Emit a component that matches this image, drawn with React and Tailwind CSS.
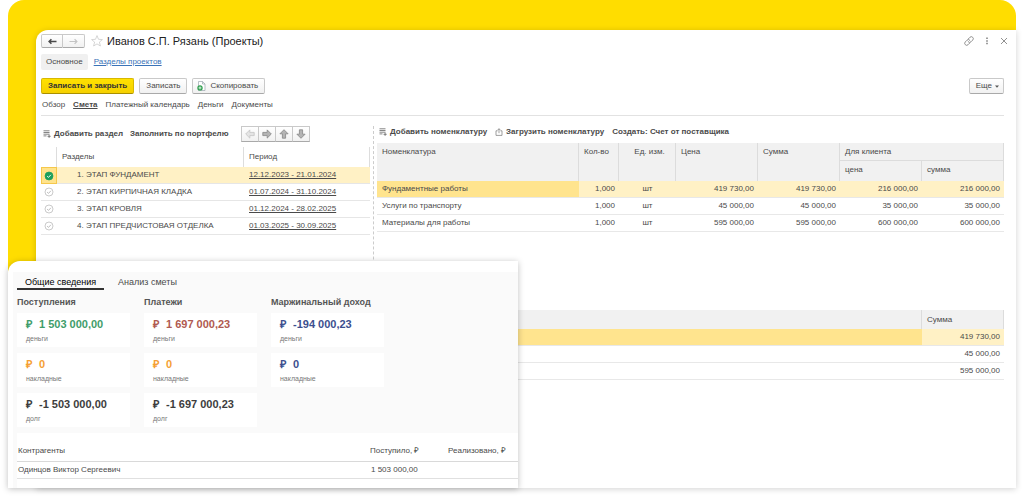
import React, { useState } from 'react';

const sections = [
  { name: '1. ЭТАП ФУНДАМЕНТ', period: '12.12.2023 - 21.01.2024' },
  { name: '2. ЭТАП КИРПИЧНАЯ КЛАДКА', period: '01.07.2024 - 31.10.2024' },
  { name: '3. ЭТАП КРОВЛЯ', period: '01.12.2024 - 28.02.2025' },
  { name: '4. ЭТАП ПРЕДЧИСТОВАЯ ОТДЕЛКА', period: '01.03.2025 - 30.09.2025' },
];

const items = [
  { name: 'Фундаментные работы', price: '419 730,00', sum: '419 730,00', client: '216 000,00' },
  { name: 'Услуги по транспорту', price: '45 000,00', sum: '45 000,00', client: '35 000,00' },
  { name: 'Материалы для работы', price: '595 000,00', sum: '595 000,00', client: '600 000,00' },
];

const totals = [
  {
    title: 'Поступления',
    cards: [
      { value: '1 503 000,00', label: 'деньги', color: 'text-[#3f9d6b]' },
      { value: '0', label: 'накладные', color: 'text-[#f59f33]' },
      { value: '-1 503 000,00', label: 'долг', color: 'text-[#3d3d3d]' },
    ],
  },
  {
    title: 'Платежи',
    cards: [
      { value: '1 697 000,23', label: 'деньги', color: 'text-[#b05a50]' },
      { value: '0', label: 'накладные', color: 'text-[#f59f33]' },
      { value: '-1 697 000,23', label: 'долг', color: 'text-[#3d3d3d]' },
    ],
  },
  {
    title: 'Маржинальный доход',
    cards: [
      { value: '-194 000,23', label: 'деньги', color: 'text-[#3c4f8f]' },
      { value: '0', label: 'накладные', color: 'text-[#3c4f8f]' },
    ],
  },
];

const ListAddIcon = () => (
  <svg className="h-2 w-2 shrink-0" viewBox="0 0 8 8" fill="none" stroke="#666" strokeWidth="0.8">
    <path d="M0.5 0.8h6M0.5 2.5h6M0.5 4.2h6M0.5 5.9h3M4.5 6.3h3.2M6.1 4.7v3.2" />
  </svg>
);

const UploadIcon = () => (
  <svg className="h-2 w-2 shrink-0" viewBox="0 0 8 8" fill="none" stroke="#777" strokeWidth="0.7">
    <path d="M2.6 2.8H1v4.6h6V2.8H5.4M4 5.2V0.8M2.6 2.1L4 0.7l1.4 1.4" />
  </svg>
);

const CopyIcon = () => (
  <svg className="h-[10px] w-[9px]" viewBox="0 0 9 10" fill="none">
    <path d="M1.5 0.5h4l2.5 2.5v6.5h-6.5z" fill="#fff" stroke="#9aa5ae" strokeWidth="0.7" />
    <path d="M5.5 0.5v2.5H8" stroke="#9aa5ae" strokeWidth="0.7" />
    <circle cx="3" cy="6.9" r="2.7" fill="#2f9e4f" />
    <path d="M1.5 6.9h3M3 5.4v3" stroke="#fff" strokeWidth="0.8" />
  </svg>
);

const CheckIcon = ({ active }) => (
  <svg className="mx-auto block h-[10px] w-[10px]" viewBox="0 0 10 10" fill="none">
    <circle cx="5" cy="5" r="4" fill={active ? '#1a9f5c' : '#fff'} stroke={active ? '#1a9f5c' : '#b5b5b5'} strokeWidth="0.7" />
    <path d="M3.1 5.1l1.4 1.3 2.4-2.6" stroke={active ? '#fff' : '#b5b5b5'} strokeWidth="0.9" />
  </svg>
);

const BlockArrow = ({ turn, muted }) => (
  <svg className={`h-[10px] w-[10px] ${turn}`} viewBox="0 0 10 10">
    <path
      d="M0.7 5L4.8 0.9v2.5H9.2v3.2H4.8v2.5z"
      fill={muted ? '#e4e4e4' : '#b4b4b4'}
      stroke={muted ? '#c4c4c4' : '#858585'}
      strokeWidth="0.8"
    />
  </svg>
);

const NavArrow = ({ color, width, turn }) => (
  <svg className={`h-[7px] w-[9px] ${turn}`} viewBox="0 0 9 7" fill="none" stroke={color} strokeWidth={width}>
    <path d="M8.5 3.5H1.2M3.4 1.2L1.1 3.5l2.3 2.3" />
  </svg>
);

const buttonBox = 'flex items-center justify-center border border-[#c9c9c9] border-b-[#a9a9a9] bg-linear-to-b from-white to-[#f1f1f1]';

const TitleBar = () => (
  <header className="-mr-1 flex h-[14px] items-center">
    <div className="flex">
      <button type="button" aria-label="Назад" className={`h-[14px] w-[22px] rounded-l-xs ${buttonBox}`}>
        <NavArrow color="#4a4a4a" width="1.5" turn="" />
      </button>
      <button type="button" aria-label="Вперед" className={`h-[14px] w-[22px] rounded-r-xs border-l-0 ${buttonBox}`}>
        <NavArrow color="#c4c4c4" width="1.2" turn="rotate-180" />
      </button>
    </div>
    <button type="button" aria-label="В избранное" className="ml-[6px]">
      <svg className="h-3 w-3" viewBox="0 0 12 12" fill="none" stroke="#c4c4c4" strokeWidth="0.7">
        <path d="M6 0.6l1.5 3.7 3.9 0.3-3 2.5 1 3.9L6 8.9l-3.4 2.1 1-3.9-3-2.5 3.9-0.3z" />
      </svg>
    </button>
    <h1 className="ml-1 text-[11px] leading-[14px] text-[#222]">Иванов С.П. Рязань (Проекты)</h1>
    <div className="ml-auto flex items-center gap-[10px]">
      <button type="button" aria-label="Ссылка">
        <svg className="h-[10px] w-[10px]" viewBox="0 0 10 10" fill="none" stroke="#858585" strokeWidth="0.9" strokeLinecap="round">
          <path d="M4.3 2.9l1.6-1.6a1.9 1.9 0 0 1 2.8 2.8L7 5.8a1.9 1.9 0 0 1-2.8 0" />
          <path d="M5.7 7.1L4.1 8.7a1.9 1.9 0 0 1-2.8-2.8L3 4.2a1.9 1.9 0 0 1 2.8 0" />
        </svg>
      </button>
      <button type="button" aria-label="Меню">
        <svg className="h-2 w-[6px]" viewBox="0 0 6 8" fill="#858585">
          <path d="M2.2 0.6h1.6v1.5H2.2zM2.2 3.2h1.6v1.5H2.2zM2.2 5.8h1.6v1.5H2.2z" />
        </svg>
      </button>
      <button type="button" aria-label="Закрыть">
        <svg className="h-2 w-2" viewBox="0 0 8 8" fill="none" stroke="#858585" strokeWidth="0.9">
          <path d="M1 1l6 6M7 1L1 7" />
        </svg>
      </button>
    </div>
  </header>
);

const SectionsPane = () => {
  const [selected, setSelected] = useState(0);

  return (
    <section className="w-[329px] shrink-0">
      <div className="flex h-4 items-center font-bold">
        <button type="button" className="flex items-center gap-[3px] pl-[2px]">
          <ListAddIcon />
          Добавить раздел
        </button>
        <button type="button" className="ml-[7px]">Заполнить по портфелю</button>
        <div className="ml-3 flex">
          <button type="button" aria-label="Влево" className={`h-4 w-[18px] ${buttonBox}`}>
            <BlockArrow turn="" muted />
          </button>
          <button type="button" aria-label="Вправо" className={`h-4 w-[17px] border-l-0 ${buttonBox}`}>
            <BlockArrow turn="rotate-180" />
          </button>
          <button type="button" aria-label="Вверх" className={`h-4 w-[17px] border-l-0 ${buttonBox}`}>
            <BlockArrow turn="rotate-90" />
          </button>
          <button type="button" aria-label="Вниз" className={`h-4 w-[17px] border-l-0 ${buttonBox}`}>
            <BlockArrow turn="-rotate-90" />
          </button>
        </div>
      </div>

      <table className="mt-[5px] w-full table-fixed border-separate border-spacing-0 text-left">
        <colgroup>
          <col className="w-4" />
          <col className="w-[187px]" />
          <col />
        </colgroup>
        <thead>
          <tr className="h-5">
            <th className="border-r border-[#ddd]" />
            <th className="border-r border-[#ddd] p-0 pl-[5px] font-normal">Разделы</th>
            <th className="border-r border-[#ddd] p-0 pl-[5px] font-normal">Период</th>
          </tr>
        </thead>
        <tbody>
          {sections.map((row, i) => (
            <tr key={row.name} className={`h-[17px] ${i === selected ? 'bg-[#fff1c5]' : ''}`} onClick={() => setSelected(i)}>
              <td className={i === selected ? 'border border-[#f5c84c] bg-[#ffe38c] p-0' : 'border-b border-[#e6e6e6] p-0'}>
                <CheckIcon active={i === selected} />
              </td>
              <td className="border-b border-[#e6e6e6] p-0 pl-5">{row.name}</td>
              <td className="border-b border-[#e6e6e6] p-0 pl-[5px]">
                <a href="#period" className="underline">{row.period}</a>
              </td>
            </tr>
          ))}
        </tbody>
      </table>
    </section>
  );
};

const ItemsTable = () => {
  const head = 'border-r border-[#dcdcdc] p-0 pl-[5px] pt-1 align-top font-normal';
  const cell = 'border-b border-[#e8e8e8] p-0 pr-1';

  return (
    <table className="w-full table-fixed border-separate border-spacing-0 text-left">
      <colgroup>
        <col />
        <col className="w-10" />
        <col className="w-[57px]" />
        <col className="w-[82px]" />
        <col className="w-[82px]" />
        <col className="w-[82px]" />
        <col className="w-[82px]" />
      </colgroup>
      <thead className="bg-[#f1f1f1]">
        <tr className="h-[18px]">
          <th rowSpan={2} className={head}>Номенклатура</th>
          <th rowSpan={2} className={head}>Кол-во</th>
          <th rowSpan={2} className={`${head} text-center`}>Ед. изм.</th>
          <th rowSpan={2} className={head}>Цена</th>
          <th rowSpan={2} className={head}>Сумма</th>
          <th colSpan={2} className={`${head} border-b`}>Для клиента</th>
        </tr>
        <tr className="h-5">
          <th className={head}>цена</th>
          <th className={head}>сумма</th>
        </tr>
      </thead>
      <tbody>
        {items.map((row, i) => (
          <tr key={row.name} className={`h-[17px] ${i === 0 ? 'bg-[#fff1c5]' : ''}`}>
            <td className={`border-b border-[#e8e8e8] p-0 pl-[5px] ${i === 0 ? 'bg-[#ffe48e]' : ''}`}>{row.name}</td>
            <td className={`${cell} text-right`}>1,000</td>
            <td className={`${cell} pl-1 text-center`}>шт</td>
            <td className={`${cell} text-right`}>{row.price}</td>
            <td className={`${cell} text-right`}>{row.sum}</td>
            <td className={`${cell} text-right`}>{row.client}</td>
            <td className={`${cell} text-right`}>{row.client}</td>
          </tr>
        ))}
      </tbody>
    </table>
  );
};

const SumTable = () => (
  <table className="mt-[78px] w-full table-fixed border-separate border-spacing-0">
    <colgroup>
      <col />
      <col className="w-[82px]" />
    </colgroup>
    <thead className="bg-[#f1f1f1]">
      <tr className="h-[19px]">
        <th className="border-r border-[#dcdcdc]" />
        <th className="border-r border-[#dcdcdc] p-0 pl-[5px] text-left font-normal">Сумма</th>
      </tr>
    </thead>
    <tbody>
      {items.map((row, i) => (
        <tr key={row.name} className={`h-[17px] ${i === 0 ? 'bg-[#fff1c5]' : ''}`}>
          <td className={`border-b border-[#e8e8e8] p-0 ${i === 0 ? 'bg-[#ffe48e]' : ''}`} />
          <td className="border-b border-[#e8e8e8] p-0 pr-1 text-right">{row.sum}</td>
        </tr>
      ))}
    </tbody>
  </table>
);

const SummaryWindow = () => (
  <aside className="absolute bottom-0 left-0 w-[510px] rounded-tl-xl bg-white pt-[11px] pl-[5px] shadow-[0_1px_6px_rgba(0,0,0,0.25)]">
    <div className="bg-[#fafafa] pl-1">
      <nav className="flex h-[18px] text-[9px] leading-[20px]">
        <button type="button" className="w-[87px] border-b-2 border-[#333] text-center text-black">Общие сведения</button>
        <button type="button" className="ml-[14px]">Анализ сметы</button>
      </nav>
      <div className="flex h-[143px] gap-[14px] pt-[5px]">
        {totals.map((group) => (
          <div key={group.title} className="w-[113px]">
            <h2 className="text-[9px] leading-[14px] font-bold whitespace-nowrap text-[#555]">{group.title}</h2>
            <div className="mt-1 flex flex-col gap-[6px]">
              {group.cards.map((card) => (
                <div key={card.label} className="h-[34px] bg-white pt-1 pl-[9px]">
                  <p className={`flex gap-[7px] text-[11px] leading-[15px] font-bold ${card.color}`}>
                    <span>₽</span>
                    {card.value}
                  </p>
                  <p className="text-[7px] leading-[13px] text-[#777]">{card.label}</p>
                </div>
              ))}
            </div>
          </div>
        ))}
      </div>
      <table className="w-full table-fixed border-separate border-spacing-0 bg-white text-left">
        <colgroup>
          <col />
          <col className="w-[78px]" />
          <col className="w-[70px]" />
        </colgroup>
        <thead>
          <tr className="h-[29px]">
            <th className="border-b border-[#d9d9d9] p-0 pt-2 pl-px font-normal">Контрагенты</th>
            <th className="border-b border-[#d9d9d9] p-0 pt-2 font-normal">Поступило, ₽</th>
            <th className="border-b border-[#d9d9d9] p-0 pt-2 font-normal">Реализовано, ₽</th>
          </tr>
        </thead>
        <tbody>
          <tr className="h-[17px]">
            <td className="border-b border-[#e0e0e0] p-0 pl-px">Одинцов Виктор Сергеевич</td>
            <td className="border-b border-[#e0e0e0] p-0 pl-px">1 503 000,00</td>
            <td className="border-b border-[#e0e0e0] p-0" />
          </tr>
          <tr className="h-[9px]">
            <td colSpan={3} className="p-0" />
          </tr>
        </tbody>
      </table>
    </div>
  </aside>
);

export default function App() {
  return (
    <div className="overflow-hidden bg-white px-2 pb-[9px] font-['Liberation_Sans',Arial,sans-serif] text-[8px] leading-[10px] text-[#4a4a4a]">
      <div className="relative rounded-t-2xl bg-[#ffdd00] pt-[30px] pl-7">
        <main className="rounded-tl-xl bg-white pt-1 pr-3 pb-[108px] pl-[5px] shadow-[0_1px_6px_rgba(0,0,0,0.18)]">
          <TitleBar />

          <nav className="mt-[6px] flex items-center gap-[6px]">
            <a href="#main" className="rounded-xs bg-[#f0f0f0] px-[5px] py-[3px]">Основное</a>
            <a href="#sections" className="text-[#3a73b8] underline">Разделы проектов</a>
          </nav>

          <div className="mt-2 flex gap-[5px]">
            <button type="button" className="h-4 rounded-xs border border-[#d8b800] border-b-[#a98f00] bg-linear-to-b from-[#ffe100] to-[#f5d000] px-[6px] font-bold text-[#333]">
              Записать и закрыть
            </button>
            <button type="button" className={`h-4 rounded-xs px-[6px] ${buttonBox}`}>Записать</button>
            <button type="button" className={`h-4 gap-1 rounded-xs pr-[6px] pl-1 ${buttonBox}`}>
              <CopyIcon />
              Скопировать
            </button>
            <button type="button" className={`ml-auto h-4 gap-[3px] rounded-xs pr-1 pl-[6px] ${buttonBox}`}>
              Еще
              <svg className="h-[3px] w-1" viewBox="0 0 4 3" fill="#555">
                <path d="M0 0.5h4L2 2.7z" />
              </svg>
            </button>
          </div>

          <nav className="mt-[6px] flex gap-2 border-b border-[#e2e2e2] pb-[5px] pl-px">
            <a href="#overview">Обзор</a>
            <a href="#estimate" className="font-bold underline">Смета</a>
            <a href="#calendar">Платежный календарь</a>
            <a href="#money">Деньги</a>
            <a href="#documents">Документы</a>
          </nav>

          <div className="mt-[10px] flex">
            <SectionsPane />
            <div className="ml-[3px] w-[4px] shrink-0 border-l border-dashed border-[#ccc]" />
            <section className="min-w-0 flex-1">
              <div className="flex h-[17px] items-start gap-2 pt-px pl-[2px] font-bold">
                <button type="button" className="flex items-center gap-[3px]">
                  <ListAddIcon />
                  Добавить номенклатуру
                </button>
                <button type="button" className="flex items-center gap-[3px]">
                  <UploadIcon />
                  Загрузить номенклатуру
                </button>
                <button type="button">Создать: Счет от поставщика</button>
              </div>
              <ItemsTable />
              <SumTable />
            </section>
          </div>
        </main>
        <SummaryWindow />
      </div>
    </div>
  );
}
